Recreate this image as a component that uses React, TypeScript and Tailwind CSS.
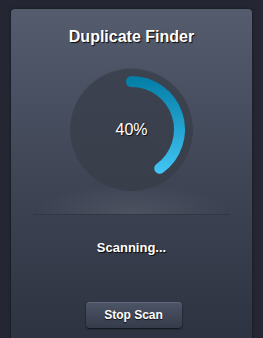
export default function App() {
  // 40% of the ring, drawn clockwise from the top
  const angle = 0.4 * 2 * Math.PI;
  const endX = 61.5 + 48 * Math.sin(angle);
  const endY = 61.5 - 48 * Math.cos(angle);

  return (
    <div className="h-[338px] w-[263px] overflow-hidden bg-[#242733] pt-[9px] font-['Liberation_Sans',Arial,sans-serif]">
      <div className="mx-[11px] h-[340px] rounded-t-[4px] bg-gradient-to-b from-[#545c6e] via-[#3f4555] to-[#2d3240] shadow-[0_0_3px_rgba(0,0,0,0.6)]">
        <h1 className="pt-[18px] text-center text-[16px] font-bold leading-[19px] text-white [text-shadow:1px_1px_1px_rgba(0,0,0,0.9)]">
          Duplicate Finder
        </h1>

        <div className="mt-[22px] flex justify-center">
          <div className="relative flex h-[123px] w-[123px] items-center justify-center rounded-full bg-gradient-to-b from-[#3d4250] to-[#393e4b] shadow-[inset_0_1px_0_rgba(255,255,255,0.06)]">
            <svg width="123" height="123" viewBox="0 0 123 123" className="absolute inset-0">
              <defs>
                <linearGradient id="arc" gradientUnits="userSpaceOnUse" x1="0" y1="12" x2="0" y2="106">
                  <stop offset="0%" stopColor="#047fa8" />
                  <stop offset="100%" stopColor="#42c6f5" />
                </linearGradient>
              </defs>
              <path
                d={`M 61.5 13.5 A 48 48 0 0 1 ${endX} ${endY}`}
                fill="none"
                stroke="url(#arc)"
                strokeWidth="11"
                strokeLinecap="round"
              />
            </svg>
            <span className="relative text-[16px] leading-none text-white [text-shadow:1px_1px_1px_rgba(0,0,0,0.8)]">
              40%
            </span>
          </div>
        </div>

        <div className="mx-[22px] -mt-[8px] h-[32px] border-b border-[#323744] bg-[radial-gradient(ellipse_at_bottom,rgba(255,255,255,0.09),transparent_70%)]" />

        <p className="mt-[25px] text-center text-[13px] font-bold leading-[16px] text-white [text-shadow:1px_1px_1px_rgba(0,0,0,0.9)]">
          Scanning...
        </p>

        <div className="mt-[46px] flex justify-center pl-[4px]">
          <button className="h-[26px] w-[96px] rounded-[4px] bg-gradient-to-b from-[#4d5568] to-[#353b49] text-[12px] font-bold text-white shadow-[0_1px_2px_rgba(0,0,0,0.7),inset_0_1px_0_rgba(255,255,255,0.12)] [text-shadow:0_1px_1px_rgba(0,0,0,0.8)]">
            Stop Scan
          </button>
        </div>
      </div>
    </div>
  );
}
